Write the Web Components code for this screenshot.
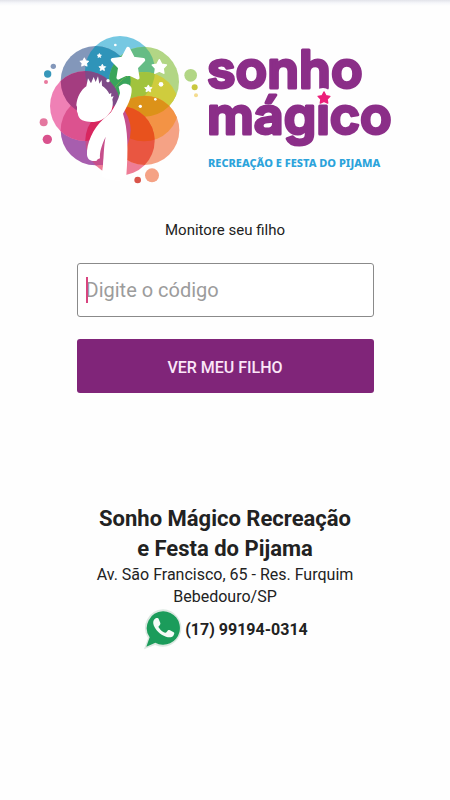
<!DOCTYPE html>
<html lang="pt-BR">
<head>
<meta charset="utf-8">
<meta name="viewport" content="width=device-width, initial-scale=1">
<title>Sonho Mágico</title>
<style>
  body {
    margin: 0;
    background: #fefefe;
    color: #222;
    font: 16px/22px Roboto, sans-serif;
  }
</style>
</head>
<body>
<monitor-page>
  <brand-logo slot="logo"></brand-logo>
  <code-form label="Monitore seu filho" placeholder="Digite o código">Ver meu filho</code-form>
  <contact-card slot="footer">
    <span slot="name">Sonho Mágico Recreação e Festa do Pijama</span>
    <span slot="street">Av. São Francisco, 65 - Res. Furquim</span>
    <span slot="city">Bebedouro/SP</span>
    <whatsapp-link slot="phone" number="5517991940314">(17) 99194-0314</whatsapp-link>
  </contact-card>
</monitor-page>

<script>
const createTemplate = html => {
  const template = document.createElement('template');
  template.innerHTML = html;
  return template;
};

const pageTemplate = createTemplate(`
  <style>
    :host {
      display: block;
      min-height: 100vh;
      background: linear-gradient(#e2e3ea, #f6f7fa 3px, #fefefe 6px);
    }

    main {
      display: flex;
      flex-direction: column;
      align-items: center;
      padding-top: 25px;
    }

    .form {
      width: 66%;
      margin-top: 34px;
    }

    footer {
      width: 66%;
      margin-top: 111px;
    }
  </style>
  <main>
    <slot name="logo"></slot>
    <div class="form"><slot></slot></div>
    <footer><slot name="footer"></slot></footer>
  </main>
`);

const logoTemplate = createTemplate(`
  <style>
    :host {
      display: block;
      width: 100%;
      max-width: 390px;
    }

    .logo {
      display: block;
      width: 100%;
    }

    .word {
      fill: #8b2e88;
      stroke: #8b2e88;
      stroke-width: 3px;
      stroke-linejoin: round;
      font: 600 52px Inter, sans-serif;
    }

    .tagline {
      fill: #2ba3db;
      font: 800 11px "Noto Sans", sans-serif;
    }
  </style>
  <svg class="logo" viewBox="0 0 390 160" role="img" aria-label="Sonho Mágico">
    <svg width="180" height="170" viewBox="0 0 540 510">
      <defs>
        <clipPath id="slate"><circle cx="197" cy="168" r="105"/></clipPath>
        <clipPath id="cyan"><circle cx="270" cy="138" r="105"/></clipPath>
        <clipPath id="green"><circle cx="342" cy="170" r="105"/></clipPath>
        <clipPath id="yellow"><circle cx="342" cy="245" r="104"/></clipPath>
        <clipPath id="orange"><circle cx="344" cy="316" r="104"/></clipPath>
        <clipPath id="pink"><circle cx="165" cy="243" r="105"/></clipPath>
        <clipPath id="purple"><circle cx="197" cy="316" r="105"/></clipPath>
        <path id="star" stroke-linejoin="round" stroke-width="20"
          d="M0-86 28-32 84-24 44 17 53 73 0 48-53 73-44 17-84-24-28-32Z"/>
      </defs>

      <!-- petals -->
      <circle cx="270" cy="138" r="105" fill="#76c8e2"/>
      <circle cx="197" cy="168" r="105" fill="#8397ba"/>
      <circle cx="342" cy="170" r="105" fill="#b2d685"/>
      <circle cx="270" cy="347" r="104" fill="#ee7d96"/>
      <circle cx="197" cy="316" r="105" fill="#a75eae"/>
      <circle cx="165" cy="243" r="105" fill="#ef80b5"/>
      <circle cx="344" cy="316" r="104" fill="#f5a285"/>

      <!-- overlaps -->
      <circle cx="270" cy="138" r="105" fill="#2f94b9" clip-path="url(#slate)"/>
      <circle cx="270" cy="138" r="105" fill="#65bc85" clip-path="url(#green)"/>
      <g clip-path="url(#slate)"><circle cx="270" cy="138" r="105" fill="#39a45b" clip-path="url(#green)"/></g>
      <circle cx="342" cy="245" r="104" fill="#cfcc3d" clip-path="url(#green)"/>
      <g clip-path="url(#cyan)"><circle cx="342" cy="245" r="104" fill="#a1c33d" clip-path="url(#green)"/></g>
      <g clip-path="url(#slate)"><circle cx="342" cy="245" r="104" fill="#39a45b" clip-path="url(#green)"/></g>
      <circle cx="344" cy="316" r="104" fill="#f39345" clip-path="url(#yellow)"/>
      <circle cx="344" cy="316" r="104" fill="#dc9219" clip-path="url(#green)"/>
      <circle cx="165" cy="243" r="105" fill="#dc528f" clip-path="url(#purple)"/>
      <circle cx="165" cy="243" r="105" fill="#a43d80" clip-path="url(#slate)"/>
      <g clip-path="url(#slate)"><circle cx="165" cy="243" r="105" fill="#7e4b87" clip-path="url(#cyan)"/></g>
      <circle cx="270" cy="347" r="104" fill="#e95641" clip-path="url(#orange)"/>
      <g clip-path="url(#yellow)"><circle cx="270" cy="347" r="104" fill="#e8521d" clip-path="url(#orange)"/></g>
      <circle cx="270" cy="347" r="104" fill="#c64f8b" clip-path="url(#purple)"/>
      <g clip-path="url(#purple)"><circle cx="270" cy="347" r="104" fill="#d8265f" clip-path="url(#pink)"/></g>

      <!-- child reaching for the star -->
      <g fill="#fff">
        <path d="M143 264c-5-8 1-14-4-23 2-25 14-46 30-57l5-24 9 15 8-19 6 15 7-17 4 22 7-11 1 17c10 6 18 15 22 25l6-3-1 11 8-1-4 9c3 12 1 24-3 34l-8 10c-16 23-51 30-79 19-9-5-13-12-14-22Z"/>
        <path d="M243 262c11-18 23-38 27-58l-4-19 8-5 5-3c12-3 26 4 26 16 1 24-14 53-26 73 15 44 16 113 10 185l-23 18-43-9-5-22c3-36 3-75 9-103-12 25-19 47-17 65l-7 3-3 4c-11 3-27 1-29-17-2-35 19-81 47-106Z"/>
        <path d="M217 439l5-39 66 5v51l-14 6-57-5Z"/>
        <g stroke="#fff">
          <use href="#star" transform="translate(294 118) scale(.55)"/>
          <use href="#star" transform="translate(388 126) scale(.25)"/>
          <use href="#star" transform="translate(163 112) scale(.15)"/>
          <use href="#star" transform="translate(217 128) scale(.12)"/>
          <use href="#star" transform="translate(208 92) scale(.08)"/>
          <use href="#star" transform="translate(355 191) scale(.13)"/>
        </g>
        <circle cx="256" cy="60" r="4"/>
        <circle cx="234" cy="167" r="5"/>
        <circle cx="393" cy="178" r="7"/>
        <circle cx="376" cy="223" r="4"/>
        <circle cx="331" cy="244" r="5"/>
      </g>

      <!-- bubbles -->
      <circle cx="70" cy="124" r="8" fill="#8397ba"/>
      <circle cx="53" cy="147" r="11" fill="#3697ba"/>
      <circle cx="48" cy="171" r="6" fill="#e9799e"/>
      <circle cx="41" cy="292" r="12" fill="#e4779f"/>
      <circle cx="52" cy="343" r="14" fill="#d9528d"/>
      <circle cx="482" cy="151" r="19" fill="#b2d685"/>
      <circle cx="494" cy="187" r="9" fill="#c9c83f"/>
      <circle cx="498" cy="211" r="6" fill="#f4dc8f"/>
      <circle cx="366" cy="451" r="21" fill="#f5a285"/>
      <circle cx="323" cy="465" r="10" fill="#d9544a"/>
    </svg>

    <text class="word" x="177" y="63">sonho</text>
    <text class="word" x="177" y="109">mágico</text>
    <circle cx="293" cy="71" r="8" fill="#fefefe"/>
    <use href="#star" transform="translate(294 73) scale(.07)" fill="#ec1e79" stroke="#ec1e79"/>
    <text class="tagline" x="178" y="142">RECREAÇÃO E FESTA DO PIJAMA</text>
  </svg>
`);

const formTemplate = createTemplate(`
  <style>
    :host {
      display: block;
    }

    form {
      display: flex;
      flex-direction: column;
    }

    label {
      font-size: 15px;
      text-align: center;
    }

    .field {
      position: relative;
      margin: 22px 0;
    }

    .field::before {
      content: "";
      position: absolute;
      left: 9px;
      top: 14px;
      bottom: 14px;
      width: 2px;
      background: #d8447f;
    }

    input {
      display: block;
      box-sizing: border-box;
      width: 100%;
      height: 54px;
      padding: 0 8px;
      border: 1px solid #8a8a8a;
      border-radius: 3px;
      background: #fff;
      color: inherit;
      font: 20px/24px Roboto, sans-serif;
    }

    input::placeholder {
      color: #9c9c9c;
      opacity: 1;
    }

    button {
      height: 54px;
      padding: 3px 8px 0;
      border: 0;
      border-radius: 3px;
      background: #802579;
      color: #fbe6f8;
      font: 500 16px/22px Roboto, sans-serif;
      text-transform: uppercase;
      cursor: pointer;
    }
  </style>
  <form>
    <label for="code"></label>
    <div class="field"><input id="code" type="text" autocomplete="off"></div>
    <button type="submit"><slot></slot></button>
  </form>
`);

const contactTemplate = createTemplate(`
  <style>
    :host {
      display: block;
      text-align: center;
    }

    h1 {
      margin: 0 16px;
      font: 700 22px/30px Roboto, sans-serif;
    }

    p {
      margin: 0;
    }
  </style>
  <h1><slot name="name"></slot></h1>
  <p><slot name="street"></slot></p>
  <p><slot name="city"></slot></p>
  <slot name="phone"></slot>
`);

const whatsappTemplate = createTemplate(`
  <style>
    :host {
      display: block;
    }

    a {
      display: inline-flex;
      align-items: center;
      gap: 2px;
      color: inherit;
      font-weight: 700;
      text-decoration: none;
    }

    svg {
      width: 41px;
      height: 43px;
    }
  </style>
  <a>
    <svg viewBox="24 24 123 129" aria-hidden="true">
      <path fill="#dce8e1" d="M87 28a56 56 0 1 1-24 107l-33 13 12-34A56 56 0 0 1 87 28Z"/>
      <path fill="#1b9c5b" d="M87 34a50 50 0 1 1-23 94l-27 12 10-28A50 50 0 0 1 87 34Z"/>
      <path fill="#f4fbf7" d="M65 55c4-2 8-1 9 2l5 12c1 3-1 6-5 10-1 2 0 4 2 6 4 6 10 11 17 13 2 1 3 0 5-2l4-5c2-2 4-1 6 0l11 6c3 2 2 6-1 10-5 6-13 6-22 3-18-6-31-19-37-34-3-9-1-17 6-21Z"/>
    </svg>
    <slot></slot>
  </a>
`);

class MonitorPage extends HTMLElement {
  constructor() {
    super();
    this.attachShadow({ mode: 'open' });
    this.shadowRoot.appendChild(pageTemplate.content.cloneNode(true));
  }
}

class BrandLogo extends HTMLElement {
  constructor() {
    super();
    this.attachShadow({ mode: 'open' });
    this.shadowRoot.appendChild(logoTemplate.content.cloneNode(true));
  }
}

class CodeForm extends HTMLElement {
  static get observedAttributes() {
    return ['label', 'placeholder'];
  }

  constructor() {
    super();
    this.attachShadow({ mode: 'open' });
    this.shadowRoot.appendChild(formTemplate.content.cloneNode(true));
    this.labelNode = this.shadowRoot.querySelector('label');
    this.input = this.shadowRoot.getElementById('code');
    this.shadowRoot.querySelector('form')
      .addEventListener('submit', this.onSubmit.bind(this));
  }

  attributeChangedCallback(name, oldVal, newVal) {
    if (name === 'label') this.labelNode.textContent = newVal;
    else this.input.placeholder = newVal;
  }

  /**
   * Hands the typed code over to the page.
   * @protected
   */
  onSubmit(event) {
    event.preventDefault();
    const detail = { code: this.input.value };
    this.dispatchEvent(new CustomEvent('code-submit', { detail, bubbles: true }));
  }
}

class ContactCard extends HTMLElement {
  constructor() {
    super();
    this.attachShadow({ mode: 'open' });
    this.shadowRoot.appendChild(contactTemplate.content.cloneNode(true));
  }
}

class WhatsappLink extends HTMLElement {
  static get observedAttributes() {
    return ['number'];
  }

  constructor() {
    super();
    this.attachShadow({ mode: 'open' });
    this.shadowRoot.appendChild(whatsappTemplate.content.cloneNode(true));
  }

  attributeChangedCallback(name, oldVal, newVal) {
    this.shadowRoot.querySelector('a').href = `https://wa.me/${newVal}`;
  }
}

customElements.define('monitor-page', MonitorPage);
customElements.define('brand-logo', BrandLogo);
customElements.define('code-form', CodeForm);
customElements.define('contact-card', ContactCard);
customElements.define('whatsapp-link', WhatsappLink);
</script>
</body>
</html>
